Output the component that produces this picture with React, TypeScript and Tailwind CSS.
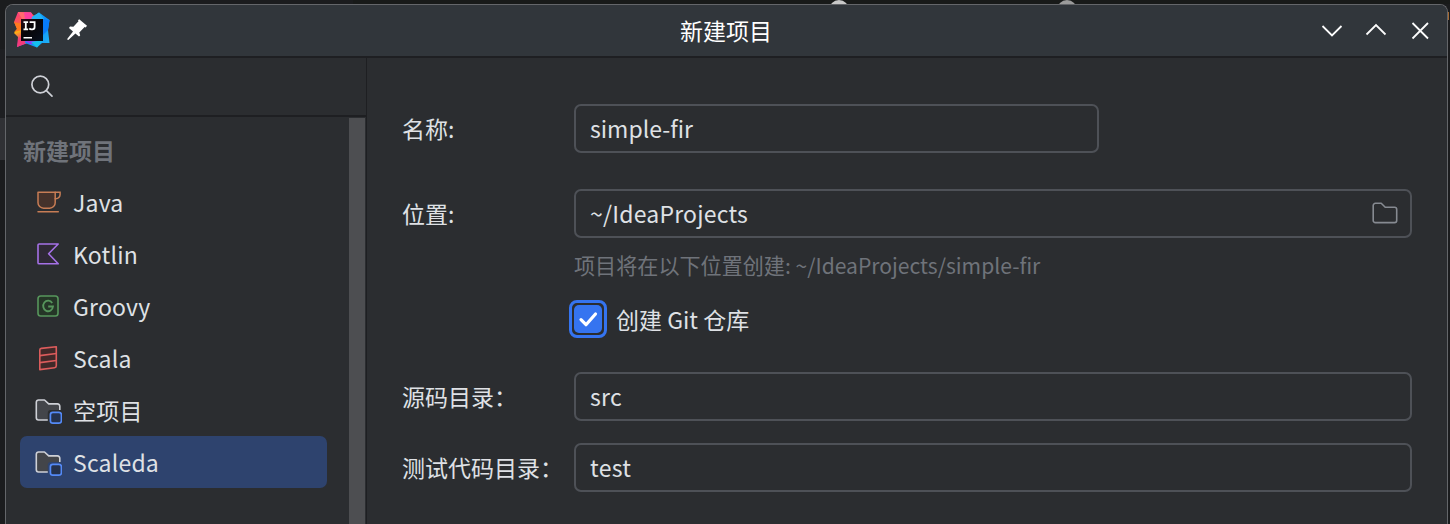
import type { ReactNode } from "react";

function IdeaLogo() {
  return (
    <svg width="38" height="38" viewBox="0 0 38 38" className="mb-[3px] shrink-0">
      <defs>
        <linearGradient id="warm" x1="0" y1="0" x2="0.3" y2="1">
          <stop offset="0" stopColor="#ff318c" />
          <stop offset="0.35" stopColor="#fb5d4c" />
          <stop offset="0.55" stopColor="#fdb60d" />
          <stop offset="0.8" stopColor="#f0387e" />
          <stop offset="1" stopColor="#c83bd6" />
        </linearGradient>
        <linearGradient id="cool" x1="0" y1="0" x2="1" y2="1">
          <stop offset="0" stopColor="#21d7f5" />
          <stop offset="0.5" stopColor="#0a8dfb" />
          <stop offset="1" stopColor="#23b9f5" />
        </linearGradient>
        <linearGradient id="core" x1="0" y1="0" x2="1" y2="1">
          <stop offset="0" stopColor="#2a0a18" />
          <stop offset="0.4" stopColor="#080507" />
          <stop offset="1" stopColor="#07101f" />
        </linearGradient>
      </defs>
      <path d="M5 2 18 2.5 24 9 20 31 4 37 5 27 1 23 4 19 1 12Z" fill="url(#warm)" />
      <path d="M1 12 9 14V20L1 22 4 19Z" fill="#ff7a1f" />
      <path d="M5 2 18 2.5 21 9H9Z" fill="#ff6a6e" />
      <path d="M11 2.2 18 2.5 21 9H12Z" fill="#fb3fa0" />
      <path d="M4 37 6 27 10 31 16 32Z" fill="#f43b78" />
      <path d="M19 7 26 2.5 36.5 10 35 20 36.5 33 29 33 24 37.5 12 33Z" fill="url(#cool)" />
      <path d="M19 7 26 2.5 31 9H19Z" fill="#22b2f4" />
      <path d="M29 9 36.5 10 35 20 29 26Z" fill="#087cfa" />
      <path d="M12 31H24L18 34.5Z" fill="#913bf2" />
      <path d="M18 32 30 30 24 37.5Z" fill="#15c1ed" />
      <rect x="8" y="9" width="22" height="22" fill="url(#core)" />
      <path d="M10.5 12.2h4.6M12.8 12.2v7.2M10.5 19.4h4.6M16.6 12.2h5v4.9q0 2.3-2.3 2.3h-.9q-1.3 0-2.1-1" fill="none" stroke="#fff" strokeWidth="1.8" />
      <path d="M10.5 27.7H19" stroke="#fff" strokeWidth="1.5" />
    </svg>
  );
}

function Pin() {
  return (
    <svg width="24" height="24" viewBox="0 0 24 24" className="mb-[3px] shrink-0">
      <path d="M14.2 2.3 22 8.7 20.7 10.4 19.6 10 14.3 15.5 15.2 18.5 14 19.5 10.4 16.4 3.3 23 2 22.2 8 14.6 4 11 5 9.5 8.4 9.8 13.5 4.2 13 3.2Z" fill="#fff" />
    </svg>
  );
}

function JavaIcon() {
  return (
    <svg width="28" height="28" viewBox="0 0 28 28" fill="none" stroke="#c77d55" strokeWidth="1.5">
      <path d="M4 4.3H21.2V14.7a5.5 5.5 0 0 1-5.5 5.5H9.5A5.5 5.5 0 0 1 4 14.7Z" fill="#45322b" strokeLinejoin="round" />
      <path d="M21.2 4.3H26.1V6.6a4.2 4.2 0 0 1-4.2 4.2h-.7M4 23.8H24.3" strokeLinecap="round" />
    </svg>
  );
}

function KotlinIcon() {
  return (
    <svg width="28" height="28" viewBox="0 0 28 28" fill="#2f2936" stroke="#a571e6" strokeWidth="1.6" strokeLinejoin="round">
      <path d="M4 5.1Q4 4 5.1 4H24.2L14.6 13.8 24.2 23.8H5.1Q4 23.8 4 22.7Z" />
    </svg>
  );
}

function GroovyIcon() {
  return (
    <svg width="28" height="28" viewBox="0 0 28 28" fill="none" stroke="#57965c" strokeWidth="1.6">
      <rect x="4" y="4" width="20" height="20" rx="2.7" fill="#253627" />
      <path d="M18.2 11A4.9 5.3 0 1 0 19 14.5H14.2" strokeWidth="1.8" />
    </svg>
  );
}

function ScalaIcon() {
  return (
    <svg width="28" height="28" viewBox="0 0 28 28" stroke="#db5c5c" strokeWidth="1.6" strokeLinejoin="round">
      <path d="M5.8 6.1Q5.8 4.6 7.3 4.4L22.3 2.7V21.7Q22.3 23.5 20.5 23.7L5.8 25.6Z" fill="#402929" />
      <path d="M5.8 11.6 22.3 9.5M5.8 18.6 22.3 16.5" fill="none" />
    </svg>
  );
}

function ModuleIcon({ active = false }: { active?: boolean }) {
  return (
    <svg width="28" height="28" viewBox="0 0 28 28">
      <path d="M2.3 6.2A2.2 2.2 0 0 1 4.5 4H10.5L14.7 7.9H23.5A2.3 2.3 0 0 1 25.8 10.2V24H4.5A2.2 2.2 0 0 1 2.3 21.8Z" fill="#43454a" stroke="#ced0d6" strokeWidth="1.6" strokeLinejoin="round" />
      <rect x="13.8" y="13.9" width="16" height="16" rx="3" fill={active ? "#2e436e" : "#2b2d30"} />
      <rect x="16.4" y="16.3" width="11" height="10.8" rx="2.4" fill="#25324d" stroke="#548af7" strokeWidth="1.7" />
    </svg>
  );
}

function Row({ icon, label, selected = false }: { icon: ReactNode; label: string; selected?: boolean }) {
  return (
    <div className={`flex h-[52px] w-[307px] items-center rounded-[7px] pl-[14px] ${selected ? "bg-[#2e436e]" : ""}`}>
      <span className="h-7 w-7 shrink-0">{icon}</span>
      <span className="ml-[11px] whitespace-nowrap tracking-[0.2px]">{label}</span>
    </div>
  );
}

function Field({ value, className = "", children }: { value: string; className?: string; children?: ReactNode }) {
  return (
    <div className={`flex h-[49px] items-center justify-between rounded-[7px] border-2 border-[#4e5157] pr-3 pl-[14px] ${className}`}>
      <span>{value}</span>
      {children}
    </div>
  );
}

function FormRow({ label, children }: { label: string; children: ReactNode }) {
  return (
    <div className="flex h-[49px] items-center">
      <span className="w-[172px] shrink-0 whitespace-nowrap">{label}</span>
      {children}
    </div>
  );
}

export default function App() {
  return (
    <div className="relative h-[524px] w-[1450px] overflow-hidden bg-[#1b1c1e] pt-1 pl-[5px] font-['Noto_Sans_CJK_SC',sans-serif] text-[23px] leading-none text-[#dfe1e5]">
      <div className="absolute top-0 left-[353px] h-1 w-[1097px] bg-[#181a19]" />
      <div className="absolute top-0 left-[829px] h-5 w-5 rounded-full bg-[#c8c8c8]" />
      <div className="absolute top-0 left-[1057px] h-5 w-5 rounded-full bg-[#9b9b9b]" />
      <div className="absolute top-[12px] left-[1444px] h-2 w-[5px] bg-[#a56a32]" />
      <div className="absolute top-[49px] left-0 h-[69px] w-[5px] bg-[#1e1f22]" />
      <div className="absolute top-[118px] left-0 h-[42px] w-[5px] bg-[#303135]" />
      <div className="relative flex h-[521px] w-[1443px] flex-col overflow-hidden rounded-t-[8px] border border-b-0 border-[#64666a] bg-[#2b2d30]">
        <header className="flex h-[53px] shrink-0 items-center border-b-2 border-[#1e1f22] bg-[#31363b] pl-[7px]">
          <IdeaLogo />
          <div className="ml-[14px]"><Pin /></div>
          <span className="ml-[591px] text-white">新建项目</span>
          <svg className="mr-[-1px] mb-[2px] ml-auto" width="132" height="44" viewBox="0 0 132 44" fill="none" stroke="#fcfcfc" strokeWidth="1.8">
            <path d="M6.5 18 16 27.5 25.5 18M50.5 26.5 60 17 69.5 26.5M96.5 15 112 30.5M112 15 96.5 30.5" />
          </svg>
        </header>
        <div className="flex min-h-0 flex-1">
          <aside className="flex w-[361px] shrink-0 flex-col border-r border-[#1e1f22]">
            <div className="flex h-[59px] shrink-0 items-center border-b-2 border-[#1e1f22] pl-[23px]">
              <svg width="26" height="26" viewBox="0 0 26 26" fill="none" stroke="#ced0d6" strokeWidth="1.7" strokeLinecap="round">
                <circle cx="11.3" cy="10.5" r="8.4" />
                <path d="M17.4 16.7 23 22.2" />
              </svg>
            </div>
            <div className="flex flex-1 justify-between">
              <nav className="pt-[7px] pl-[14px]">
                <div className="flex h-[52px] items-center pl-[3px] font-bold text-[#6f737a]">新建项目</div>
                <Row icon={<JavaIcon />} label="Java" />
                <Row icon={<KotlinIcon />} label="Kotlin" />
                <Row icon={<GroovyIcon />} label="Groovy" />
                <Row icon={<ScalaIcon />} label="Scala" />
                <Row icon={<ModuleIcon />} label="空项目" />
                <Row icon={<ModuleIcon active />} label="Scaleda" selected />
              </nav>
              <div className="mt-px mr-px w-4 bg-[#4d4e51]" />
            </div>
          </aside>
          <main className="flex-1 pt-[46px] pl-[35px]">
            <FormRow label="名称:"><Field value="simple-fir" className="w-[525px]" /></FormRow>
            <div className="h-9" />
            <FormRow label="位置:">
              <Field value="~/IdeaProjects" className="w-[838px] tracking-[0.22px]">
                <svg width="26" height="26" viewBox="0 0 26 26" fill="none" stroke="#868a91" strokeWidth="1.6" strokeLinejoin="round">
                  <path d="M1.2 4.5A2.2 2.2 0 0 1 3.4 2.3H9.2L13.2 6.2H22.5A2.2 2.2 0 0 1 24.7 8.4V19.4A2.2 2.2 0 0 1 22.5 21.6H3.4A2.2 2.2 0 0 1 1.2 19.4Z" />
                </svg>
              </Field>
            </FormRow>
            <div className="flex h-[62px] items-center pb-[7px] pl-[172px] text-[21.1px] text-[#6f737a]">项目将在以下位置创建: ~/IdeaProjects/simple-fir</div>
            <div className="flex h-[38px] items-center pl-[167px]">
              <div className="flex h-[38px] w-[38px] items-center justify-center rounded-[8px] border-[3px] border-[#3574f0]">
                <svg width="28" height="28" viewBox="0 0 28 28">
                  <rect width="28" height="28" rx="5" fill="#3574f0" />
                  <path d="M7 14.6 12 19.7 21.5 9" fill="none" stroke="#fff" strokeWidth="3.2" strokeLinecap="round" strokeLinejoin="round" />
                </svg>
              </div>
              <span className="ml-[9px] pt-px">创建 Git 仓库</span>
            </div>
            <div className="h-[34px]" />
            <FormRow label="源码目录："><Field value="src" className="w-[838px] tracking-[0.3px]" /></FormRow>
            <div className="h-[22px]" />
            <FormRow label="测试代码目录："><Field value="test" className="w-[838px] tracking-[0.3px]" /></FormRow>
          </main>
        </div>
      </div>
    </div>
  );
}
